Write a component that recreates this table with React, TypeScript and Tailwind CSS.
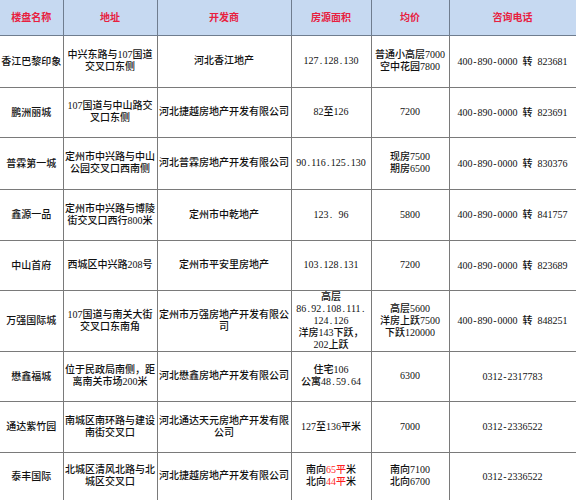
import { Fragment } from "react";

type Row = {
	name: string;
	addr: string[];
	dev: string[];
	area: React.ReactNode[];
	price: string[];
	phone: string;
	h: string;
};

const RED = "text-[#ff1f1f]";

// SimSun-style half-width punctuation: give "." and "-" a full digit width
function half(s: string) {
	return s.split(/([.\-])/).map((part, i) =>
		part === "." || part === "-" ? (
			<span key={i} className="inline-block w-[5px] text-center">
				{part}
			</span>
		) : (
			<Fragment key={i}>{part}</Fragment>
		),
	);
}

const ROWS: Row[] = [
	{
		name: "香江巴黎印象",
		addr: ["中兴东路与107国道", "交叉口东侧"],
		dev: ["河北香江地产"],
		area: ["127.128.130"],
		price: ["普通小高层7000", "空中花园7800"],
		phone: "400-890-0000  转  823681",
		h: "h-[52px]",
	},
	{
		name: "鹏洲丽城",
		addr: ["107国道与中山路交", "叉口东侧"],
		dev: ["河北捷越房地产开发有限公司"],
		area: ["82至126"],
		price: ["7200"],
		phone: "400-890-0000  转  823691",
		h: "h-[50px]",
	},
	{
		name: "普霖第一城",
		addr: ["定州市中兴路与中山", "公园交叉口西南侧"],
		dev: ["河北普霖房地产开发有限公司"],
		area: ["90.116.125.130"],
		price: ["现房7500", "期房6500"],
		phone: "400-890-0000  转  830376",
		h: "h-[52px]",
	},
	{
		name: "鑫源一品",
		addr: ["定州市中兴路与博陵", "街交叉口西行800米"],
		dev: ["定州市中乾地产"],
		area: ["123.  96"],
		price: ["5800"],
		phone: "400-890-0000  转  841757",
		h: "h-[51px]",
	},
	{
		name: "中山首府",
		addr: ["西城区中兴路208号"],
		dev: ["定州市平安里房地产"],
		area: ["103.128.131"],
		price: ["7200"],
		phone: "400-890-0000  转  823689",
		h: "h-[50px]",
	},
	{
		name: "万强国际城",
		addr: ["107国道与南关大街", "交叉口东南角"],
		dev: ["定州市万强房地产开发有限公", "司"],
		area: ["高层", "86.92.108.111.", "124.126", "洋房143下跃，", "202上跃"],
		price: ["高层5600", "洋房上跃7500", "下跃120000"],
		phone: "400-890-0000  转  848251",
		h: "h-[58px]",
	},
	{
		name: "懋鑫福城",
		addr: ["位于民政局南侧，距", "离南关市场200米"],
		dev: ["河北懋鑫房地产开发有限公司"],
		area: ["住宅106", "公寓48.59.64"],
		price: ["6300"],
		phone: "0312-2317783",
		h: "h-[50px]",
	},
	{
		name: "通达紫竹园",
		addr: ["南城区南环路与建设", "南街交叉口"],
		dev: ["河北通达天元房地产开发有限", "公司"],
		area: ["127至136平米"],
		price: ["7000"],
		phone: "0312-2336522",
		h: "h-[51px]",
	},
	{
		name: "泰丰国际",
		addr: ["北城区清风北路与北", "城区交叉口"],
		dev: ["河北捷越房地产开发有限公司"],
		area: [
			<Fragment key="a">
				南向<span className={RED}>65平</span>米
			</Fragment>,
			<Fragment key="b">
				北向<span className={RED}>44平</span>米
			</Fragment>,
		],
		price: ["南向7100", "北向6700"],
		phone: "0312-2336522",
		h: "h-[48px]",
	},
];

const HEADERS = ["楼盘名称", "地址", "开发商", "房源面积", "均价", "咨询电话"];

function Lines({ lines }: { lines: React.ReactNode[] }) {
	return (
		<>
			{lines.map((l, i) => (
				<div key={i} className="whitespace-pre leading-[12px]">
					{typeof l === "string" ? half(l) : l}
				</div>
			))}
		</>
	);
}

const cell = "border border-[#7a7a7a] px-0 text-center align-middle";

export default function App() {
	return (
		<div className="w-[576px] h-[500px] overflow-hidden bg-white font-['Liberation_Serif','Noto_Sans_CJK_SC',serif] text-[10px] font-medium text-[#111]">
			<table className="w-[576px] table-fixed border-collapse">
				<colgroup>
					<col className="w-[63px]" />
					<col className="w-[94px]" />
					<col className="w-[134px]" />
					<col className="w-[80px]" />
					<col className="w-[78px]" />
					<col className="w-[127px]" />
				</colgroup>
				<thead>
					<tr className="h-[35px] bg-[#c6d9f1]">
						{HEADERS.map((h, i) => (
							<th
								key={h}
								className={`border border-[#6f7d8f] border-t-0 ${i === 0 ? "border-l-0" : ""} text-center align-middle font-bold text-[#e8203f]`}
							>
								{h}
							</th>
						))}
					</tr>
				</thead>
				<tbody>
					{ROWS.map((r) => (
						<tr key={r.name} className={r.h}>
							<td className={`${cell} border-l-0`}>{r.name}</td>
							<td className={cell}>
								<Lines lines={r.addr} />
							</td>
							<td className={cell}>
								<Lines lines={r.dev} />
							</td>
							<td className={cell}>
								<Lines lines={r.area} />
							</td>
							<td className={cell}>
								<Lines lines={r.price} />
							</td>
							<td className={`${cell} whitespace-pre`}>{half(r.phone)}</td>
						</tr>
					))}
				</tbody>
			</table>
		</div>
	);
}
